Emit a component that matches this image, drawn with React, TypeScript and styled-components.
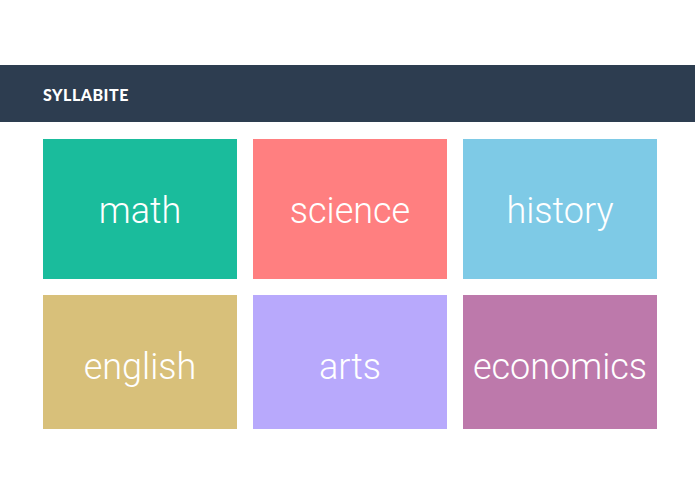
import React from "react";
import styled, { createGlobalStyle } from "styled-components";

const Global = createGlobalStyle`
  html, body { margin: 0; padding: 0; background: #ffffff; }
  body { font-family: Roboto, "Helvetica Neue", Arial, sans-serif; }
`;

const Page = styled.div`
  width: 695px;
  height: 494px;
  background: #ffffff;
  padding-top: 65px;
  box-sizing: border-box;
`;

const Header = styled.header`
  height: 57px;
  background: #2d3d50;
  display: flex;
  align-items: center;
  padding-left: 43px;
`;

const Logo = styled.div`
  font-family: Lato, "Open Sans", sans-serif;
  font-weight: 900;
  font-size: 16px;
  letter-spacing: 0.5px;
  color: #ffffff;
  padding-top: 1px;
`;

const Main = styled.main`
  height: 307px;
  overflow: hidden;
  position: relative;
  padding: 17px 0 0 43px;
  box-sizing: border-box;
`;

const Grid = styled.div`
  display: grid;
  grid-template-columns: repeat(3, 194px);
  grid-auto-rows: 140px;
  gap: 16px;
`;

const Card = styled.div<{ $bg: string }>`
  background: ${(p) => p.$bg};
  display: flex;
  align-items: center;
  justify-content: center;
  color: #ffffff;
  font-family: Roboto, "Helvetica Neue", sans-serif;
  font-weight: 300;
  font-size: 36px;
  padding-top: 4px;
  box-sizing: border-box;
`;

const subjects = [
  { name: "math", color: "#1abc9c" },
  { name: "science", color: "#ff7f80" },
  { name: "history", color: "#7ecae6" },
  { name: "english", color: "#d8c07a" },
  { name: "arts", color: "#b8a9fc" },
  { name: "economics", color: "#bd79ab" },
];

export default function App() {
  return (
    <>
      <Global />
      <Page>
        <Header>
          <Logo>SYLLABITE</Logo>
        </Header>
        <Main>
          <Grid>
            {subjects.map((s) => (
              <Card key={s.name} $bg={s.color}>
                {s.name}
              </Card>
            ))}
          </Grid>
        </Main>
      </Page>
    </>
  );
}
